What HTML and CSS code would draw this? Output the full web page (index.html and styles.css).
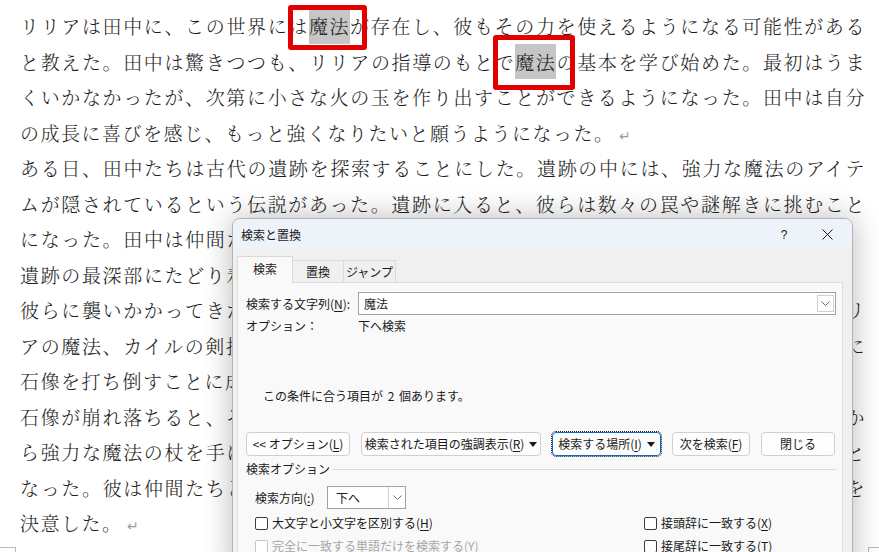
FILE: index.html
```html
<!DOCTYPE html>
<html lang="ja">
<head>
    <meta charset="utf-8">
    <title>検索と置換</title>
    <link rel="stylesheet" href="styles.css">
</head>
<body>
    <div class="page">
        <p class="para">
            <span class="ln full">リリアは田中に、この世界には<span class="hit">魔法</span>が存在し、彼もその力を使えるようになる可能性がある</span>
            <span class="ln full">と教えた。田中は驚きつつも、リリアの指導のもとで<span class="hit">魔法</span>の基本を学び始めた。最初はうま</span>
            <span class="ln full">くいかなかったが、次第に小さな火の玉を作り出すことができるようになった。田中は自分</span>
            <span class="ln">の成長に喜びを感じ、もっと強くなりたいと願うようになった。<span class="ret">↵</span></span>
        </p>
        <p class="para">
            <span class="ln full">ある日、田中たちは古代の遺跡を探索することにした。遺跡の中には、強力な魔法のアイテ</span>
            <span class="ln full">ムが隠されているという伝説があった。遺跡に入ると、彼らは数々の罠や謎解きに挑むこと</span>
            <span class="ln full">になった。田中は仲間たちと力を合わせ、次々と困難を乗り越えていった。そしてついに、</span>
            <span class="ln full">遺跡の最深部にたどり着いた。そこには巨大な石像が眠っており、それが突然動き出して、</span>
            <span class="ln full">彼らに襲いかかってきた。田中たちは力を合わせて立ち向かい、激しい戦いの末、田中とリ</span>
            <span class="ln full">アの魔法、カイルの剣技、そして仲間たちの知恵が一つになり、彼らは長い激闘の末ついに</span>
            <span class="ln">石像を打ち倒すことに成功した。<span class="ret">↵</span></span>
        </p>
        <p class="para">
            <span class="ln full">石像が崩れ落ちると、その奥から隠された部屋が現れた。田中たちは部屋へと進み、祭壇か</span>
            <span class="ln full">ら強力な魔法の杖を手に入れた。その杖は田中の手に渡り、彼はさらなる魔力を得ることと</span>
            <span class="ln full">なった。彼は仲間たちと共に、この世界の平和を守るため、さらなる冒険へと旅立つことを</span>
            <span class="ln">決意した。<span class="ret">↵</span></span>
        </p>
    </div>

    <!-- 赤枠 -->
    <div class="mark mark-1"></div>
    <div class="mark mark-2"></div>

    <div class="crop crop-bl"></div>
    <div class="crop crop-br"></div>

    <!-- 検索と置換ダイアログ -->
    <div class="dlg">
        <div class="dlg-title">
            <span class="dlg-name">検索と置換</span>
            <span class="dlg-help">?</span>
            <span class="dlg-close">
                <svg width="11" height="11" viewBox="0 0 11 11"><path d="M0.5 0.5L10.5 10.5M10.5 0.5L0.5 10.5" stroke="#1a1a1a" stroke-width="1"/></svg>
            </span>
        </div>
        <div class="tabs">
            <span class="tab tab-find active">検索</span>
            <span class="tab tab-rep">置換</span>
            <span class="tab tab-jump">ジャンプ</span>
        </div>
        <div class="panel">
            <div class="row row-find">
                <span class="lbl">検索する文字列(<u>N</u>):</span>
                <div class="combo combo-wide">
                    <span>魔法</span>
                    <span class="drop">
                        <svg width="9" height="5" viewBox="0 0 9 5"><path d="M0.5 0.5L4.5 4.5L8.5 0.5" fill="none" stroke="#6a6a6a" stroke-width="1"/></svg>
                    </span>
                </div>
            </div>
            <div class="row row-opt">
                <span class="lbl">オプション：</span>
                <span>下へ検索</span>
            </div>
            <div class="msg">この条件に合う項目が&nbsp;2&nbsp;個あります。</div>
            <div class="btns">
                <span class="btn btn-1">&lt;&lt; オプション(<u>L</u>)</span>
                <span class="btn btn-2">検索された項目の強調表示(<u>R</u>)<i class="caret"></i></span>
                <span class="btn btn-3 focus">検索する場所(<u>I</u>)<i class="caret"></i></span>
                <span class="btn btn-4">次を検索(<u>F</u>)</span>
                <span class="btn btn-5">閉じる</span>
            </div>
            <div class="group"><span>検索オプション</span><i class="rule"></i></div>
            <div class="row row-dir">
                <span class="lbl-dir">検索方向(<u>:</u>)</span>
                <div class="combo combo-dir">
                    <span>下へ</span>
                    <span class="drop drop-tall">
                        <svg width="9" height="5" viewBox="0 0 9 5"><path d="M0.5 0.5L4.5 4.5L8.5 0.5" fill="none" stroke="#6a6a6a" stroke-width="1"/></svg>
                    </span>
                </div>
            </div>
            <div class="checks">
                <label class="chk"><i class="box"></i>大文字と小文字を区別する(<u>H</u>)</label>
                <label class="chk"><i class="box"></i>接頭辞に一致する(<u>X</u>)</label>
                <label class="chk off"><i class="box"></i>完全に一致する単語だけを検索する(<u>Y</u>)</label>
                <label class="chk"><i class="box"></i>接尾辞に一致する(<u>T</u>)</label>
            </div>
        </div>
    </div>
</body>
</html>
```

FILE: styles.css
```css
* {
    box-sizing: border-box;
}

body {
    margin: 0;
    width: 879px;
    height: 552px;
    overflow: hidden;
    position: relative;
    background: #fff;
}

/* 本文 */
.page {
    padding: 8px 0 0 20px;
    font-family: "Noto Serif CJK JP", "Noto Sans CJK JP", serif;
    font-size: 19px;
    font-weight: 300;
    line-height: 35.5px;
    letter-spacing: 1.5px;
    color: #1e1e1e;
}

.para {
    margin: 0;
    width: 846px;
}

.ln {
    display: block;
    height: 35.5px;
}

.ln.full {
    text-align: justify;
    text-align-last: justify;
}

.hit {
    display: inline-block;
    line-height: 35.5px;
    background: #c6c6c6;
}

.ret {
    font-family: "DejaVu Sans", sans-serif;
    font-size: 14px;
    line-height: 0;
    color: #9c9c9c;
    margin-left: 4px;
}

.mark {
    position: absolute;
    border: 5px solid #e10000;
    border-radius: 3px;
}

.mark-1 {
    left: 288px;
    top: 5px;
    width: 79px;
    height: 45px;
}

.mark-2 {
    left: 493px;
    top: 35px;
    width: 82px;
    height: 55px;
}

.crop {
    position: absolute;
    top: 547px;
    height: 8px;
    border-top: 1px solid #b8b8b8;
}

.crop-bl {
    left: 0;
    width: 16px;
    border-right: 1px solid #b8b8b8;
}

.crop-br {
    left: 868px;
    width: 14px;
    border-left: 1px solid #b8b8b8;
}

/* ダイアログ */
.dlg {
    position: absolute;
    left: 232px;
    top: 218px;
    width: 621px;
    height: 360px;
    border: 1px solid #b4b4b4;
    border-radius: 8px 8px 0 0;
    background: #f0f0f0;
    box-shadow: 0 0 30px rgba(0, 0, 0, 0.28);
    font-family: "Noto Sans CJK JP", sans-serif;
    font-size: 12px;
    line-height: 16px;
    color: #1a1a1a;
    overflow: hidden;
}

.dlg u {
    text-decoration: underline;
    text-underline-offset: 2px;
}

.dlg-title {
    display: flex;
    align-items: center;
    height: 31px;
    padding: 0 15px 0 8px;
    background: #eef2f9;
}

.dlg-help {
    margin-left: auto;
    width: 20px;
    text-align: center;
    font-family: "Liberation Sans", sans-serif;
    font-size: 12px;
}

.dlg-close {
    display: flex;
    justify-content: center;
    width: 20px;
    margin-left: 23px;
}

.tabs {
    display: flex;
    align-items: flex-end;
    height: 32px;
    padding-left: 4px;
}

.tab {
    display: flex;
    align-items: center;
    justify-content: center;
    height: 22px;
    border: 1px solid #d9d9d9;
    border-bottom: none;
    background: #f0f0f0;
}

.tab.active {
    height: 27px;
    margin-bottom: -1px;
    position: relative;
    background: #f9f9f9;
    padding-bottom: 3px;
}

.tab-find {
    width: 56px;
}

.tab-rep {
    width: 51px;
    border-left: none;
}

.tab-jump {
    width: 52px;
    border-left: none;
}

.panel {
    margin: 0 9px 0 4px;
    height: 300px;
    padding: 9px 6px 0 8px;
    border: 1px solid #dcdcdc;
    background: #f9f9f9;
}

.row {
    display: flex;
    align-items: center;
}

.row-find {
    height: 23px;
}

.lbl {
    width: 112px;
}

.combo {
    display: flex;
    align-items: center;
    justify-content: space-between;
    height: 23px;
    padding-left: 5px;
    border: 1px solid #a2a2a2;
    background: #fff;
}

.combo-wide {
    flex: 1;
}

.drop {
    display: flex;
    align-items: center;
    justify-content: center;
    width: 17px;
    height: 17px;
    margin-right: 1px;
    border: 1px solid #d0d0d0;
    background: #fff;
}

.drop-tall {
    height: 21px;
    margin-right: 0;
    border-top: none;
    border-bottom: none;
    border-right: none;
}

.row-opt {
    margin-top: 3px;
    height: 16px;
}

.msg {
    margin-top: 54px;
    padding-left: 17px;
    word-spacing: 2px;
}

.btns {
    display: flex;
    gap: 11px;
    margin-top: 28px;
}

.btn {
    display: flex;
    align-items: center;
    justify-content: center;
    height: 24px;
    border: 1px solid #d0d0d0;
    border-radius: 4px;
    background: #fdfdfd;
}

.btn-1 { width: 104px; }
.btn-2 { width: 180px; }
.btn-3 { width: 109px; }
.btn-4 { width: 78px; }
.btn-5 { width: 74px; }

.btn.focus {
    border-color: #1167c4;
    outline: 1px dotted #1a1a1a;
    outline-offset: 0;
}

.caret {
    display: inline-block;
    margin-left: 5px;
    border-left: 4px solid transparent;
    border-right: 4px solid transparent;
    border-top: 5px solid #1a1a1a;
}

.group {
    display: flex;
    align-items: center;
    margin-top: 5px;
    height: 16px;
}

.rule {
    flex: 1;
    height: 1px;
    margin-left: 3px;
    background: #d9d9d9;
}

.row-dir {
    margin-top: 9px;
    padding-left: 9px;
    height: 23px;
}

.lbl-dir {
    width: 72px;
}

.combo-dir {
    width: 79px;
    padding-left: 8px;
}

.checks {
    display: grid;
    grid-template-columns: 389px auto;
    row-gap: 7px;
    margin-top: 6px;
    padding-left: 9px;
}

.chk {
    display: flex;
    align-items: center;
    height: 16px;
}

.box {
    width: 13px;
    height: 13px;
    margin-right: 4px;
    border: 1px solid #3c3c3c;
    border-radius: 2px;
    background: #fff;
}

.chk.off {
    color: #a6a6a6;
}

.chk.off .box {
    border-color: #c6c6c6;
}
```
